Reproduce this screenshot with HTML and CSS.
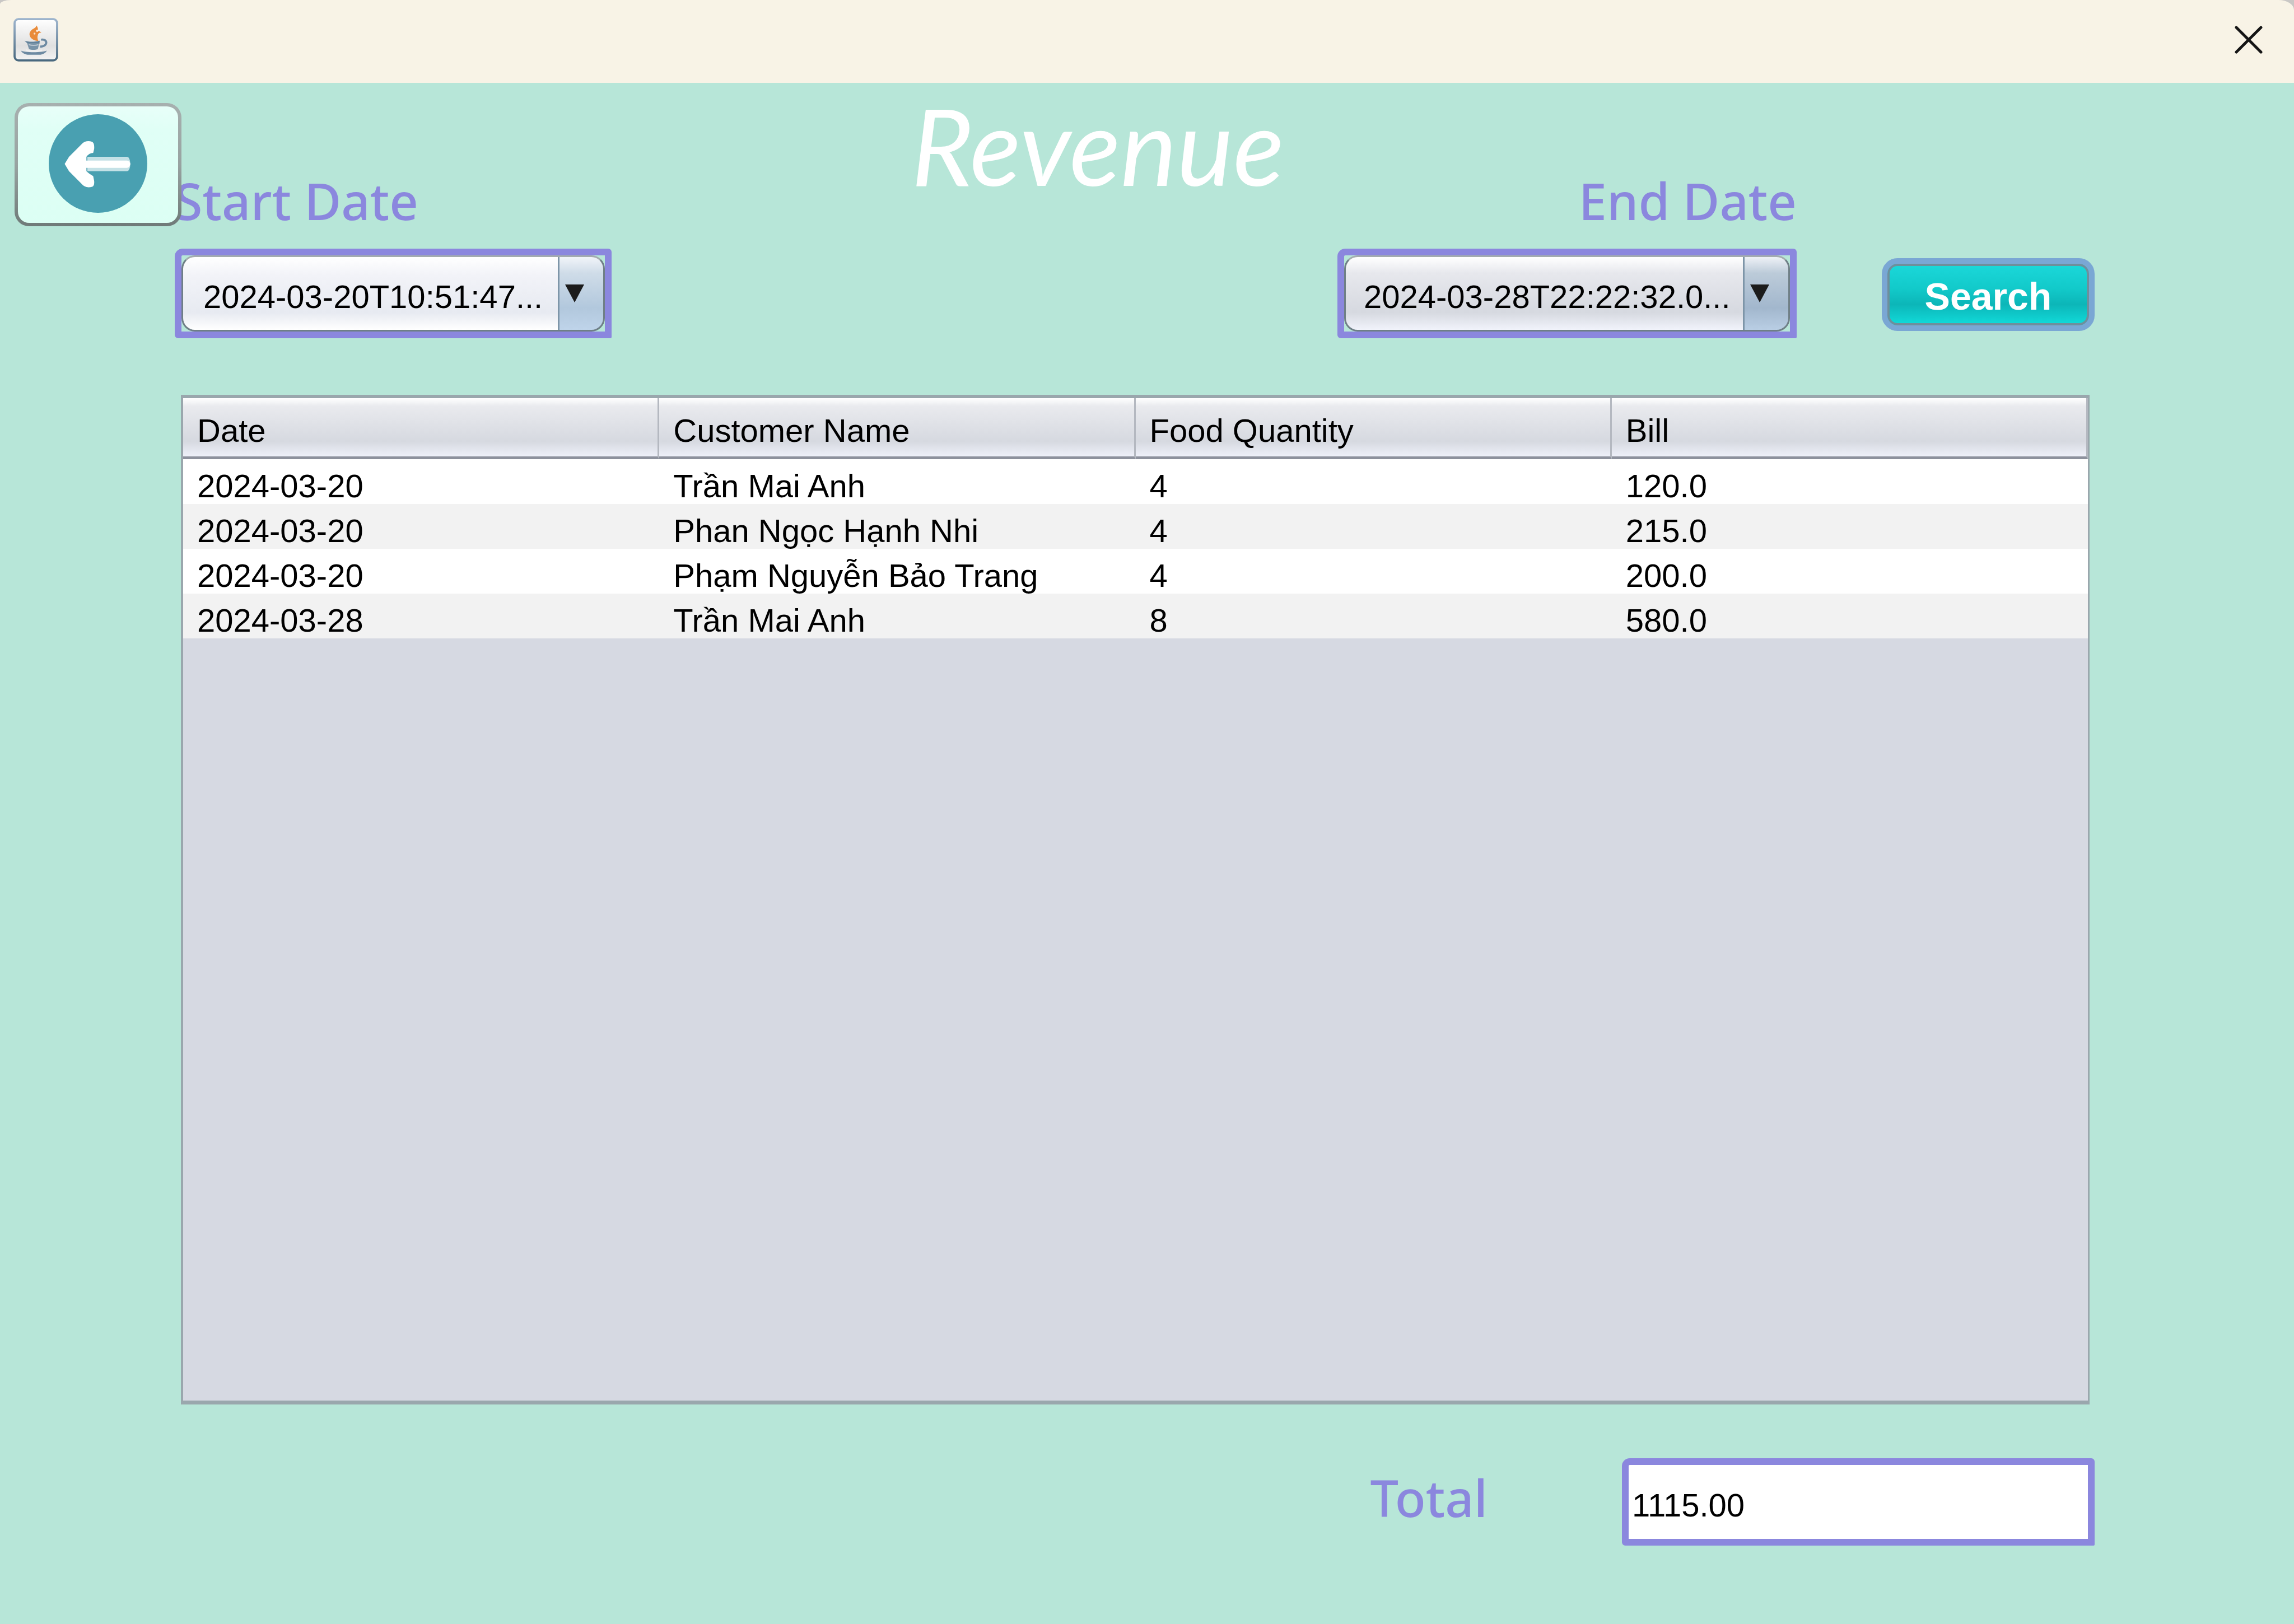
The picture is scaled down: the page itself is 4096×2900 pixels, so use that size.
FILE: index.html
```html
<!DOCTYPE html>
<html lang="en">
<head>
<meta charset="utf-8">
<title>Revenue</title>
<link rel="stylesheet" href="styles.css">
</head>
<body>
<header class="titlebar">
  <svg class="app-icon" viewBox="84 108 276 268" aria-hidden="true">
    <defs>
      <linearGradient id="frame" x1="0" y1="0" x2="0" y2="1">
        <stop offset="0" stop-color="#9db4cd"/><stop offset="1" stop-color="#4a697f"/>
      </linearGradient>
      <linearGradient id="plate" x1="0" y1="0" x2="0" y2="1">
        <stop offset="0" stop-color="#ffffff"/><stop offset=".65" stop-color="#e0e0e0"/><stop offset="1" stop-color="#f4f4f4"/>
      </linearGradient>
    </defs>
    <rect x="91" y="115" width="262" height="254" rx="24" fill="url(#plate)" stroke="url(#frame)" stroke-width="13"/>
    <path d="M226 154c10 14 12 26 4 38 8-6 16-4 26 8-14-4-20 4-22 14-4 12-2 22 4 36-18-2-36-8-48-22-12-18-8-34 8-48 14-10 24-12 28-26z" fill="#e98b3a"/>
    <circle cx="230" cy="187" r="7" fill="#fbeee2"/><circle cx="214" cy="204" r="6" fill="#f9dfc8"/>
    <path d="M152 248c26 8 62 8 94 0l-2 18c-22 6-50 6-72 0z" fill="#5f7f99"/>
    <path d="M168 262h76l-10 38c-16 6-40 6-54 0z" fill="#7893a8"/>
    <path d="M178 272c20 6 42 6 60 0" fill="none" stroke="#b9c6d1" stroke-width="7"/>
    <path d="M254 242c20-4 34 6 32 20s-20 24-38 22" fill="none" stroke="#6d8aa2" stroke-width="13"/>
    <path d="M130 308c20 14 134 14 160 0-8 16-28 26-46 26h-66c-20 0-40-10-48-26z" fill="#6d8aa2"/>
    <path d="M162 306c20 8 76 8 98 0" fill="none" stroke="#f0f0f0" stroke-width="9"/>
  </svg>
  <button class="close" type="button" aria-label="Close">
    <svg viewBox="0 0 50 50" aria-hidden="true"><path d="M3 3L47 47M47 3L3 47" stroke="#151515" stroke-width="5" stroke-linecap="round"/></svg>
  </button>
</header>

<main class="page">
  <button class="back" type="button" aria-label="Back">
    <svg viewBox="0 0 204 204" aria-hidden="true">
      <circle cx="102" cy="102" r="102" fill="#49a0b1"/>
      <path d="M80 88H162q6 0 7 15q-1 15-7 15H80z" fill="#c4e1e6"/>
      <path d="M60 96H162q5 0 7 7q-2 8-7 8H60z" fill="#fff"/>
      <path d="M33 103L42 88L68 62Q76 53 90 57Q95 60 94 72L92 80Q84 80 78 88V118Q84 124 92 128L94 138Q95 148 90 150Q76 154 68 144L42 118z" fill="#fff"/>
    </svg>
  </button>

  <h1 class="title">Revenue</h1>

  <form class="filters">
    <div class="field field-start">
      <label for="start">Start Date</label>
      <div class="combo">
        <select id="start"><option>2024-03-20T10:51:47...</option></select>
        <svg class="arrow" viewBox="0 0 34 32" aria-hidden="true"><path d="M0 0H34L17 32z" fill="#1c1c1c"/></svg>
      </div>
    </div>
    <div class="field field-end">
      <label for="end">End Date</label>
      <div class="combo">
        <select id="end"><option>2024-03-28T22:22:32.0...</option></select>
        <svg class="arrow" viewBox="0 0 34 32" aria-hidden="true"><path d="M0 0H34L17 32z" fill="#1c1c1c"/></svg>
      </div>
    </div>
    <button class="search" type="button">Search</button>
  </form>

  <section class="results">
    <table>
      <thead>
        <tr><th>Date</th><th>Customer Name</th><th>Food Quantity</th><th>Bill</th></tr>
      </thead>
      <tbody>
        <tr><td>2024-03-20</td><td>Trần Mai Anh</td><td>4</td><td>120.0</td></tr>
        <tr><td>2024-03-20</td><td>Phan Ngọc Hạnh Nhi</td><td>4</td><td>215.0</td></tr>
        <tr><td>2024-03-20</td><td>Phạm Nguyễn Bảo Trang</td><td>4</td><td>200.0</td></tr>
        <tr><td>2024-03-28</td><td>Trần Mai Anh</td><td>8</td><td>580.0</td></tr>
      </tbody>
    </table>
  </section>

  <div class="total">
    <label for="total">Total</label>
    <input id="total" type="text" value="1115.00">
  </div>
</main>
</body>
</html>
```
FILE: styles.css
```css
* {
  box-sizing: border-box;
}

html {
  background: #c9c7c5;
}

body {
  margin: 0;
  min-height: 100vh;
  display: flex;
  flex-direction: column;
  font-family: "Liberation Sans", Arial, sans-serif;
  font-size: 58px;
  color: #000;
}

button,
select,
input {
  font: inherit;
  color: inherit;
  margin: 0;
}

svg {
  display: block;
}

/* Window title bar */
.titlebar {
  display: flex;
  align-items: center;
  justify-content: space-between;
  height: 148px;
  padding: 0 56px 6px 24px;
  border-radius: 20px 28px 0 0 / 8px 18px 0 0;
  background: #f8f3e6;
}

.app-icon {
  width: 80px;
  height: 78px;
}

.close {
  padding: 0;
  border: 0;
  background: none;
}

.close svg {
  width: 50px;
  height: 50px;
}

/* Page */
.page {
  position: relative;
  flex: 1;
  display: flex;
  flex-direction: column;
  padding: 50px 356px 140px 312px;
  background: #b7e6d8;
}

.back {
  position: absolute;
  z-index: 1;
  left: 26px;
  top: 36px;
  width: 298px;
  height: 220px;
  display: grid;
  place-items: center;
  padding: 0 0 4px;
  border: 6px solid transparent;
  border-radius: 26px;
  background:
    linear-gradient(#e8fff9, #e0fff6 20%, #dcfff4) padding-box,
    linear-gradient(#a7b0af, #98a3a1 50%, #6f7a78) border-box;
}

.back svg {
  width: 176px;
  height: 176px;
}

.title {
  margin: 0 132px 4px 0;
  font-family: "Ink Free", Lato, sans-serif;
  font-size: 190px;
  font-style: italic;
  font-weight: 400;
  line-height: 120px;
  text-align: center;
  color: #fff;
}

.filters {
  display: flex;
  align-items: flex-end;
}

.field {
  display: flex;
  flex-direction: column;
  gap: 50px;
}

.field-start {
  width: 780px;
  margin-right: auto;
}

.field-end {
  width: 820px;
  margin-right: 152px;
}

.field-end label {
  text-align: right;
}

label {
  font-family: "Noto Sans", sans-serif;
  font-size: 90px;
  font-weight: 500;
  line-height: 72px;
  color: #8b87de;
}

.combo {
  position: relative;
  height: 160px;
  border: 12px solid #8b87de;
  border-radius: 14px 6px 2px 6px;
}

.combo select {
  appearance: none;
  width: 100%;
  height: 100%;
  padding: 10px 80px 0 36px;
  border: 3px solid #6f7f86;
  border-top-color: #a3acae;
  border-radius: 24px;
  background:
    linear-gradient(#7d95a8, #7d95a8) right 78px top / 3px 100% no-repeat,
    linear-gradient(#f1f4f9, #cfdce8 22%, #b2c8dd 70%, #bfd4ea) right / 78px 100% no-repeat,
    linear-gradient(#fff, #f2f3f8 25%, #e7eaf1 76%, #fff);
}

.combo #end {
  padding-left: 32px;
  background:
    linear-gradient(#7d95a8, #7d95a8) right 78px top / 3px 100% no-repeat,
    linear-gradient(#eef1f6, #bccbd9 22%, #a2b7cd 70%, #b9cee4) right / 78px 100% no-repeat,
    linear-gradient(#fff, #e7e8ed 22%, #d6d9e0 76%, #f1f3fb);
}

.arrow {
  position: absolute;
  right: 37px;
  top: 52px;
  width: 34px;
  height: 32px;
  pointer-events: none;
}

.search {
  width: 380px;
  height: 130px;
  margin-bottom: 13px;
  padding: 5px 0 0;
  border: 10px solid #7aa7d4;
  border-radius: 28px;
  background: linear-gradient(#1bd8da, #12caca 40%, #0cb6b8 66%, #12dcdb);
  box-shadow: inset 0 0 0 4px #6e8f9c;
  font-size: 68px;
  font-weight: 700;
  color: #fff;
}

/* Results */
.results {
  flex: 1;
  margin: 101px 9px 96px 11px;
  border: 6px solid #9aa7ad;
  border-width: 6px 3px 7px 4px;
  background: #d6d9e2;
}

table {
  width: 100%;
  table-layout: fixed;
  border-collapse: separate;
  border-spacing: 0;
}

th {
  height: 109px;
  padding: 10px 0 0 25px;
  border-right: 3px solid #b4b8c0;
  border-bottom: 5px solid #8d919d;
  background: linear-gradient(#fff, #e9eaee 14%, #d6d9e0 74%, #eef0f9);
  font-weight: 400;
  text-align: left;
}

td {
  height: 80px;
  padding: 16px 0 0 25px;
  line-height: 64px;
}

tbody tr {
  background: #fff;
}

tbody tr:nth-child(even) {
  background: #f2f2f2;
}

/* Total */
.total {
  display: flex;
  align-items: center;
  justify-content: flex-end;
  gap: 240px;
}

.total label {
  padding-bottom: 16px;
}

.total input {
  width: 844px;
  height: 156px;
  padding: 10px 0 0 6px;
  border: 12px solid #8b87de;
  border-radius: 14px 6px 2px 6px;
  background: #fff;
}
```
